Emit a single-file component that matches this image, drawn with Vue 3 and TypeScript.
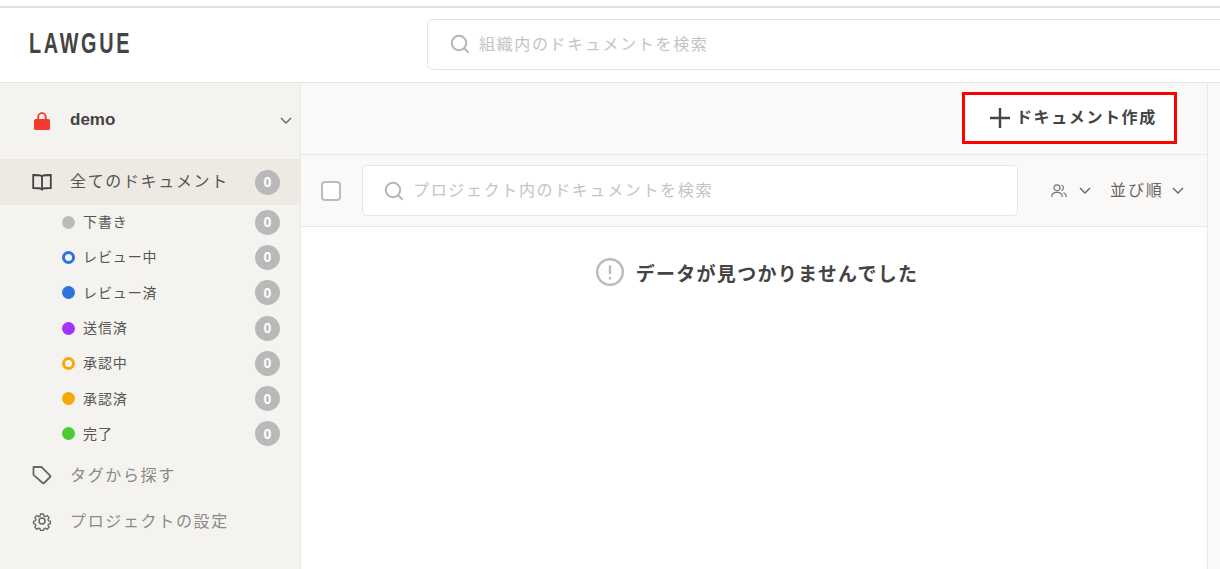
<template>
  <div class="page">
    <header class="header">
      <div class="logo-area"><span class="logo">LAWGUE</span></div>
      <div class="global-search">
        <svg class="search-icon" viewBox="0 0 20 20"><circle cx="9" cy="9" r="7.2" /><path d="M14.2 14.2 L18.6 18.6" /></svg>
        <span class="search-text">組織内のドキュメントを検索</span>
      </div>
    </header>
    <div class="body">
      <aside class="sidebar">
        <div class="project">
          <svg class="lock" viewBox="0 0 16 18">
            <path d="M4.2 8V5a3.8 3.8 0 0 1 7.6 0v3" fill="none" stroke="#f5392b" stroke-width="1.8" />
            <rect x="0" y="7" width="16" height="11" rx="1.5" fill="#f5392b" />
          </svg>
          <span class="project-name">demo</span>
          <svg class="chevron project-chevron" viewBox="0 0 12 7"><path d="M1 1l5 5 5-5" /></svg>
        </div>
        <div class="nav-item active">
          <svg class="nav-icon" viewBox="0 0 20 20">
            <path d="M10 4.2C8.6 3.2 6 3 1.2 3v13c4.600 0 7.400.1 8.800 1.200 1.400-1.100 4.200-1.200 8.800-1.200V3C14 3 11.400 3.200 10 4.200zM10 4.200v14.300" />
          </svg>
          <span class="nav-label">全てのドキュメント</span>
          <span class="badge">0</span>
        </div>
        <div class="statuses">
          <div v-for="s in statuses" :key="s.label" class="status">
            <span class="dot" :style="dotStyle(s)"></span>
            <span class="status-label">{{ s.label }}</span>
            <span class="badge">0</span>
          </div>
        </div>
        <div class="nav-item muted">
          <svg class="nav-icon" viewBox="0 0 20 20">
            <path d="M1.500 2h8l8.600 8.600a1 1 0 0 1 0 1.400l-6 6a1 1 0 0 1-1.400 0L1.500 9.800z" stroke-linejoin="round" />
          </svg>
          <span class="nav-label">タグから探す</span>
        </div>
        <div class="nav-item muted">
          <svg class="nav-icon" viewBox="0 0 24 24">
            <circle cx="12" cy="12" r="3.600" />
            <path d="M10 2.500h4l.6 2.900 1.900.8 2.500-1.600 2.800 2.800-1.600 2.500.8 1.900 2.500.6v3.200l-2.500.6-.8 1.900 1.600 2.500-2.800 2.800-2.500-1.600-1.900.8-.6 2.400h-4l-.6-2.400-1.900-.8-2.500 1.600-2.800-2.800 1.600-2.500-.8-1.900-2.500-.6v-3.200l2.500-.6.8-1.900-1.600-2.500 2.800-2.800 2.500 1.600 1.900-.8z" transform="translate(1.400 1.400) scale(.88)" stroke-linejoin="round" />
          </svg>
          <span class="nav-label">プロジェクトの設定</span>
        </div>
      </aside>
      <main class="main">
        <div class="toolbar">
          <button class="create" type="button">
            <svg class="plus" viewBox="0 0 20 20"><path d="M10 0v20M0 10h20" /></svg>
            <span class="create-text">ドキュメント作成</span>
          </button>
        </div>
        <div class="filters">
          <span class="checkbox"></span>
          <div class="project-search">
            <svg class="search-icon" viewBox="0 0 20 20"><circle cx="9" cy="9" r="7.2" /><path d="M14.2 14.2 L18.6 18.6" /></svg>
            <span class="search-text">プロジェクト内のドキュメントを検索</span>
          </div>
          <svg class="people" viewBox="0 0 16 14">
            <circle cx="6" cy="3.800" r="3" />
            <path d="M.7 13c0-3 2.200-4.600 5.300-4.600s5.300 1.600 5.300 4.600M10.500 1a3 3 0 0 1 0 5.600M12.500 8.800c1.700.6 2.800 2 2.800 4.200" />
          </svg>
          <svg class="chevron people-chevron" viewBox="0 0 12 7"><path d="M1 1l5 5 5-5" /></svg>
          <span class="sort">並び順</span>
          <svg class="chevron" viewBox="0 0 12 7"><path d="M1 1l5 5 5-5" /></svg>
        </div>
        <div class="empty">
          <svg class="alert" viewBox="0 0 28 28">
            <circle cx="14" cy="14" r="12.800" />
            <path d="M14 7.500v8.500M14 19v2.400" />
          </svg>
          <span>データが見つかりませんでした</span>
        </div>
      </main>
      <div class="strip"></div>
    </div>
  </div>
</template>

<script setup lang="ts">
interface Status {
  label: string
  color: string
  hollow?: boolean
}

const statuses: Status[] = [
  { label: '下書き', color: '#bbbbbb' },
  { label: 'レビュー中', color: '#2a73e0', hollow: true },
  { label: 'レビュー済', color: '#2a73e0' },
  { label: '送信済', color: '#a334fa' },
  { label: '承認中', color: '#f7a90a', hollow: true },
  { label: '承認済', color: '#f7a90a' },
  { label: '完了', color: '#4ccb33' }
]

function dotStyle(s: Status) {
  return s.hollow ? { border: `3px solid ${s.color}` } : { background: s.color }
}
</script>

<style>
html, body { background: #fff; overflow: hidden; }
</style>

<style scoped>
.page {
  height: 569px;
  display: flex;
  flex-direction: column;
  padding-top: 6px;
  box-sizing: border-box;
  font-family: "Liberation Sans", "Noto Sans CJK JP", sans-serif;
  color: #444;
  overflow: hidden;
}
.header {
  height: 77px;
  flex: none;
  box-sizing: border-box;
  border-top: 2px solid #e0e0e0;
  border-bottom: 1px solid #e4e4e4;
  padding-bottom: 2px;
  display: flex;
  align-items: center;
  background: #fff;
}
.logo-area { width: 427px; flex: none; padding: 0 0 3px 29px; box-sizing: border-box; }
.logo {
  display: inline-block;
  font-family: "Liberation Sans", sans-serif;
  font-size: 30px;
  font-weight: 700;
  line-height: 30px;
  letter-spacing: 4.100px;
  color: #444;
  transform: scaleX(.66);
  transform-origin: left center;
}
.global-search {
  flex: 1;
  margin-right: -20px;
  height: 51px;
  box-sizing: border-box;
  border: 1px solid #e4e4e4;
  border-radius: 6px;
  display: flex;
  align-items: center;
  padding-left: 22px;
  font-size: 16px;
  letter-spacing: 1.650px;
  color: #c4c4c4;
}
.search-text { margin-bottom: 3px; white-space: nowrap; }
.search-icon {
  width: 20px;
  height: 20px;
  margin-right: 9px;
  fill: none;
  stroke: #b5b5b5;
  stroke-width: 2;
  flex: none;
}
.body { flex: 1; display: flex; min-height: 0; }
.sidebar {
  width: 301px;
  flex: none;
  box-sizing: border-box;
  background: #f5f3f0;
  border-right: 1px solid #e8e8e8;
}
.project {
  height: 76px;
  display: flex;
  align-items: center;
  padding: 0 0 2px 34px;
  box-sizing: border-box;
}
.lock { width: 16px; height: 18px; flex: none; margin-top: 1px; }
.project-name { font-size: 17px; font-weight: 700; margin-left: 20px; flex: 1; color: #444; }
.project-chevron { margin-right: 8px; }
.chevron {
  width: 12px;
  height: 7px;
  flex: none;
  fill: none;
  stroke: #666;
  stroke-width: 1.400;
}
.nav-item {
  height: 46px;
  display: flex;
  align-items: center;
  padding: 0 20px 0 32px;
  font-size: 16px;
  letter-spacing: 1.650px;
  color: #555;
}
.nav-item.active { background: #ede9e3; }
.nav-item.active .nav-label { margin-bottom: 4px; }
.nav-item.muted { color: #8a8a86; }
.nav-item.muted .nav-label { margin-bottom: 2px; }
.nav-icon {
  width: 20px;
  height: 20px;
  flex: none;
  margin-right: 18px;
  fill: none;
  stroke: #444;
  stroke-width: 1.800;
}
.nav-item.muted .nav-icon { stroke: #666; }
.nav-label { flex: 1; white-space: nowrap; }
.badge {
  width: 25px;
  height: 25px;
  flex: none;
  border-radius: 50%;
  background: #b9b9b9;
  color: #fff;
  font-family: "Liberation Sans", sans-serif;
  font-size: 14px;
  font-weight: 700;
  letter-spacing: 0;
  display: flex;
  align-items: center;
  justify-content: center;
}
.statuses {
  display: grid;
  grid-auto-rows: 35.300px;
  padding: 0 20px 0 62px;
  margin-bottom: .5px;
  margin-top: -.5px;
}
.status {
  display: flex;
  align-items: center;
  font-size: 14px;
  letter-spacing: .9px;
  color: #555;
}
.dot {
  width: 13px;
  height: 13px;
  box-sizing: border-box;
  border-radius: 50%;
  flex: none;
  margin-right: 8px;
}
.status-label { flex: 1; margin-bottom: 2px; white-space: nowrap; }
.main { flex: 1; min-width: 0; display: flex; flex-direction: column; background: #fff; }
.toolbar {
  height: 72px;
  flex: none;
  box-sizing: border-box;
  background: #fbf9f7;
  border-bottom: 1px solid #e8e8e8;
  display: flex;
  justify-content: flex-end;
  align-items: flex-start;
  padding: 9px 30px 0 0;
}
.create {
  width: 215px;
  height: 52px;
  box-sizing: border-box;
  border: 3px solid #fe0000;
  background: #fff;
  font: inherit;
  font-size: 16px;
  font-weight: 700;
  letter-spacing: 1.600px;
  color: #444;
  display: flex;
  align-items: center;
  padding: 0 0 0 25px;
}
.create-text { margin-bottom: 4px; white-space: nowrap; }
.plus { width: 20px; height: 20px; flex: none; margin-right: 6px; fill: none; stroke: #444; stroke-width: 2.400; }
.filters {
  height: 72px;
  flex: none;
  box-sizing: border-box;
  background: #fbf9f7;
  border-bottom: 1px solid #e8e8e8;
  display: flex;
  align-items: center;
  padding: 0 23px 0 20px;
  color: #c4c4c4;
}
.checkbox {
  width: 20px;
  height: 20px;
  flex: none;
  box-sizing: border-box;
  border: 2.500px solid #bbb;
  border-radius: 4px;
  background: #fff;
}
.project-search {
  flex: none;
  width: 656px;
  height: 51px;
  margin-left: 21px;
  box-sizing: border-box;
  border: 1px solid #e6e6e6;
  border-radius: 5px;
  background: #fff;
  display: flex;
  align-items: center;
  padding-left: 21px;
  font-size: 16px;
  letter-spacing: 1.650px;
  color: #c4c4c4;
}
.people {
  width: 16px;
  height: 14px;
  flex: none;
  margin-left: 33px;
  fill: none;
  stroke: #777;
  stroke-width: 1.200;
}
.people-chevron { margin-left: 12px; }
.sort {
  margin: 0 8px 4px 19px;
  font-size: 16px;
  letter-spacing: 1.900px;
  color: #666;
  white-space: nowrap;
}
.empty {
  display: flex;
  justify-content: center;
  align-items: center;
  padding: 31px 0 0 6px;
  font-size: 19px;
  font-weight: 700;
  letter-spacing: 1.300px;
  color: #444;
}
.alert { width: 28px; height: 28px; flex: none; margin-right: 12px; fill: none; stroke: #bbb; stroke-width: 2.400; }
.strip {
  width: 13px;
  flex: none;
  box-sizing: border-box;
  border-left: 1px solid #e8e8e8;
  background: #fbf9f7;
}
</style>
